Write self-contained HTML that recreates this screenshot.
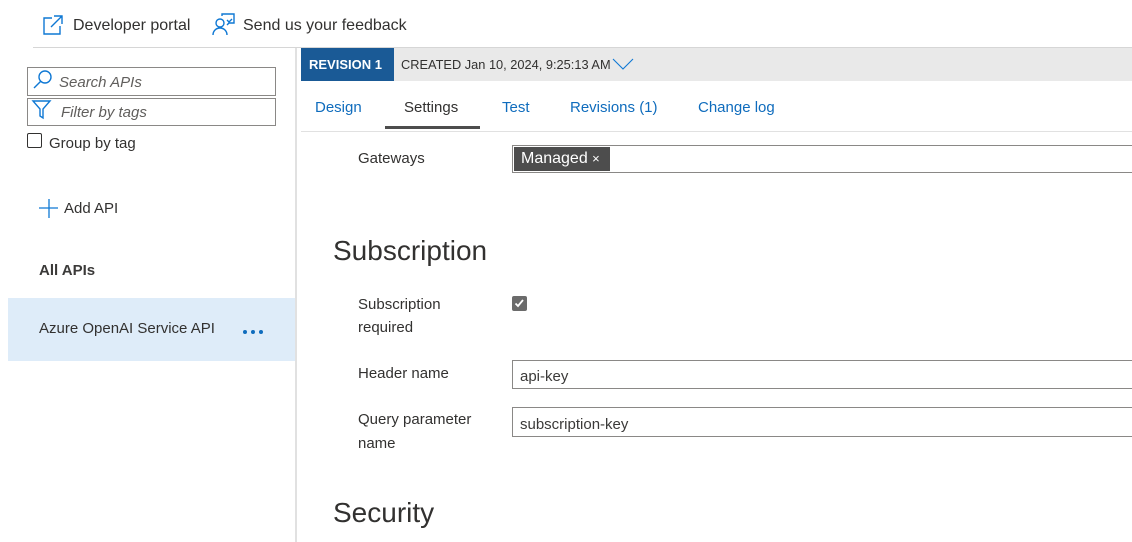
<!DOCTYPE html>
<html><head><style>
*{margin:0;padding:0;box-sizing:border-box}
body{width:1132px;height:542px;overflow:hidden;background:#fff;font-family:"Liberation Sans",sans-serif;color:#323130;position:relative;font-size:15px}
.a{position:absolute;white-space:nowrap}
.blue{color:#0f6cbd}
.inp{position:absolute;border:1px solid #8a8886;background:#fff}
</style></head><body>
<svg class="a" style="left:42px;top:14px" width="22" height="22" viewBox="0 0 22 22" fill="none" stroke="#0f78d4" stroke-width="1.4"><path d="M10 4H2v16h16v-8"/><path d="M12 2h8v8M20 2L9 13"/></svg>
<div class="a" style="left:73px;top:17px;font-size:16px">Developer portal</div>
<svg class="a" style="left:212px;top:13px" width="24" height="24" viewBox="0 0 24 24" fill="none" stroke="#0f78d4" stroke-width="1.4"><circle cx="8" cy="10" r="4"/><path d="M1 22c0-4 3-7 7-7s7 3 7 7"/><path d="M10 3V1h12v9h-5l-2 2"/><path d="M15 7l2 2 3-3"/></svg>
<div class="a" style="left:243px;top:17px;font-size:16px">Send us your feedback</div>
<div class="a" style="left:33px;top:47px;width:1099px;height:1px;background:#d6d6d6"></div>
<div class="a" style="left:295px;top:48px;width:2px;height:494px;background:#e1e1e1"></div>

<div class="inp" style="left:27px;top:67px;width:249px;height:29px"></div>
<svg class="a" style="left:32px;top:69px" width="22" height="22" viewBox="0 0 22 22" fill="none" stroke="#0f78d4" stroke-width="1.4"><circle cx="13" cy="8" r="6"/><path d="M9 12L2 19"/></svg>
<div class="a" style="left:59px;top:74px;font-style:italic;color:#605e5c">Search APIs</div>
<div class="inp" style="left:27px;top:98px;width:249px;height:28px"></div>
<svg class="a" style="left:31px;top:99px" width="22" height="22" viewBox="0 0 22 22" fill="none" stroke="#0f78d4" stroke-width="1.4"><path d="M2 2h17l-7 8v9l-3-2v-7z"/></svg>
<div class="a" style="left:61px;top:104px;font-style:italic;color:#605e5c">Filter by tags</div>
<div class="a" style="left:27px;top:133px;width:15px;height:15px;border:1px solid #323130;border-radius:2px"></div>
<div class="a" style="left:49px;top:135px">Group by tag</div>
<svg class="a" style="left:38px;top:198px" width="22" height="22" viewBox="0 0 22 22" stroke="#0f78d4" stroke-width="1.3"><path d="M11 1v19M1 10h19"/></svg>
<div class="a" style="left:64px;top:200px">Add API</div>
<div class="a" style="left:39px;top:262px;font-weight:bold;color:#3b3a39">All APIs</div>
<div class="a" style="left:8px;top:298px;width:287px;height:63px;background:#deecf9"></div>
<div class="a" style="left:39px;top:320px">Azure OpenAI Service API</div>
<div class="a" style="left:243px;top:330px;width:4px;height:4px;border-radius:2px;background:#0f6cbd"></div>
<div class="a" style="left:251px;top:330px;width:4px;height:4px;border-radius:2px;background:#0f6cbd"></div>
<div class="a" style="left:259px;top:330px;width:4px;height:4px;border-radius:2px;background:#0f6cbd"></div>

<div class="a" style="left:301px;top:48px;width:831px;height:33px;background:#e9e9e9"></div>
<div class="a" style="left:301px;top:48px;width:93px;height:33px;background:#1a5a96;color:#fff;font-weight:bold;font-size:13px;line-height:33px;padding-left:8px">REVISION 1</div>
<div class="a" style="left:401px;top:57px;font-size:12.8px">CREATED Jan 10, 2024, 9:25:13 AM</div>
<svg class="a" style="left:612px;top:58px" width="22" height="12" viewBox="0 0 22 12" fill="none" stroke="#0f78d4" stroke-width="1.1"><path d="M1 1l10 10L21 1"/></svg>
<div class="a blue" style="left:315px;top:99px">Design</div>
<div class="a" style="left:404px;top:99px">Settings</div>
<div class="a" style="left:385px;top:126px;width:95px;height:3px;background:#4d4d4d"></div>
<div class="a blue" style="left:502px;top:99px">Test</div>
<div class="a blue" style="left:570px;top:99px">Revisions (1)</div>
<div class="a blue" style="left:698px;top:99px">Change log</div>
<div class="a" style="left:301px;top:131px;width:831px;height:1px;background:#e1e1e1"></div>

<div class="a" style="left:358px;top:150px">Gateways</div>
<div class="inp" style="left:512px;top:145px;width:640px;height:28px"></div>
<div class="a" style="left:514px;top:147px;height:24px;width:96px;background:#4d4d4d;color:#fff;line-height:24px;padding-left:7px;font-size:16px">Managed <span style="font-size:13px">×</span></div>
<div class="a" style="left:333px;top:235px;font-size:28px">Subscription</div>
<div class="a" style="left:358px;top:293px;line-height:23px">Subscription<br>required</div>
<div class="a" style="left:512px;top:296px;width:15px;height:15px;background:#6b6b6b;border-radius:2px"></div>
<svg class="a" style="left:512px;top:296px" width="15" height="15" viewBox="0 0 15 15" fill="none" stroke="#fff" stroke-width="1.8"><path d="M3.5 7.5l2.5 2.5 5-6"/></svg>
<div class="a" style="left:358px;top:365px">Header name</div>
<div class="inp" style="left:512px;top:360px;width:640px;height:29px"></div>
<div class="a" style="left:520px;top:368px;color:#3b3a39">api-key</div>
<div class="a" style="left:358px;top:408px;line-height:24px">Query parameter<br>name</div>
<div class="inp" style="left:512px;top:407px;width:640px;height:30px"></div>
<div class="a" style="left:520px;top:416px;color:#3b3a39">subscription-key</div>
<div class="a" style="left:333px;top:497px;font-size:28px">Security</div>
</body></html>
